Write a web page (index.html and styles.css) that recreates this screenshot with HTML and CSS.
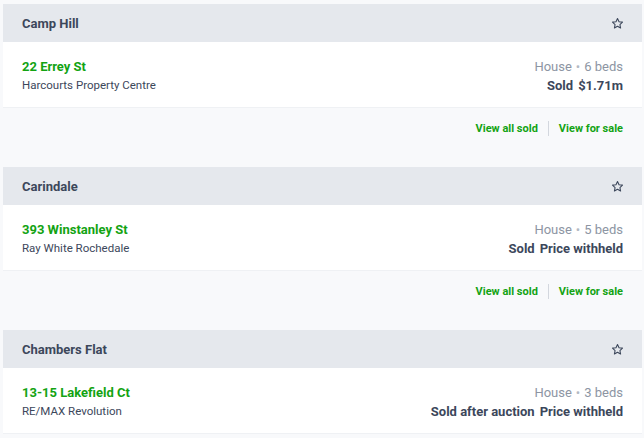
FILE: index.html
```html
<!DOCTYPE html>
<html lang="en">
<head>
<meta charset="utf-8">
<title>Sold properties</title>
<link rel="stylesheet" href="styles.css">
</head>
<body>
<div class="list">
  <section class="suburb">
    <header class="suburb-head">
      <h2 class="suburb-name">Camp Hill</h2>
      <button class="star" aria-label="Save suburb"><svg viewBox="0 0 24 24" width="13" height="13"><path d="M12 2.8l2.8 5.9 6.4.8-4.7 4.4 1.2 6.4L12 17.2l-5.7 3.1 1.2-6.4-4.7-4.4 6.4-.8z" fill="none" stroke="currentColor" stroke-width="2" stroke-linejoin="round"/></svg></button>
    </header>
    <div class="sale">
      <div class="sale-col">
        <a class="addr" href="#">22 Errey St</a>
        <div class="agency">Harcourts Property Centre</div>
      </div>
      <div class="sale-col right">
        <div class="meta">House<span class="dot">•</span>6 beds</div>
        <div class="price"><span>Sold</span><span>$1.71m</span></div>
      </div>
    </div>
    <div class="links">
      <a href="#">View all sold</a><span class="sep"></span><a href="#">View for sale</a>
    </div>
  </section>

  <section class="suburb">
    <header class="suburb-head">
      <h2 class="suburb-name">Carindale</h2>
      <button class="star" aria-label="Save suburb"><svg viewBox="0 0 24 24" width="13" height="13"><path d="M12 2.8l2.8 5.9 6.4.8-4.7 4.4 1.2 6.4L12 17.2l-5.7 3.1 1.2-6.4-4.7-4.4 6.4-.8z" fill="none" stroke="currentColor" stroke-width="2" stroke-linejoin="round"/></svg></button>
    </header>
    <div class="sale">
      <div class="sale-col">
        <a class="addr" href="#">393 Winstanley St</a>
        <div class="agency">Ray White Rochedale</div>
      </div>
      <div class="sale-col right">
        <div class="meta">House<span class="dot">•</span>5 beds</div>
        <div class="price"><span>Sold</span><span>Price withheld</span></div>
      </div>
    </div>
    <div class="links">
      <a href="#">View all sold</a><span class="sep"></span><a href="#">View for sale</a>
    </div>
  </section>

  <section class="suburb">
    <header class="suburb-head">
      <h2 class="suburb-name">Chambers Flat</h2>
      <button class="star" aria-label="Save suburb"><svg viewBox="0 0 24 24" width="13" height="13"><path d="M12 2.8l2.8 5.9 6.4.8-4.7 4.4 1.2 6.4L12 17.2l-5.7 3.1 1.2-6.4-4.7-4.4 6.4-.8z" fill="none" stroke="currentColor" stroke-width="2" stroke-linejoin="round"/></svg></button>
    </header>
    <div class="sale">
      <div class="sale-col">
        <a class="addr" href="#">13-15 Lakefield Ct</a>
        <div class="agency">RE/MAX Revolution</div>
      </div>
      <div class="sale-col right">
        <div class="meta">House<span class="dot">•</span>3 beds</div>
        <div class="price"><span>Sold after auction</span><span>Price withheld</span></div>
      </div>
    </div>
  </section>
</div>
</body>
</html>
```

FILE: styles.css
```css
* { box-sizing: border-box; }
html, body { margin: 0; padding: 0; }
body {
  background: #f8f9fb;
  font-family: Roboto, "Liberation Sans", sans-serif;
  color: #3c475b;
  overflow: hidden;
}
.list {
  padding: 4px 2px 0 3px;
}
.suburb {
  margin-bottom: 27px;
}
.suburb-head {
  height: 38px;
  background: #e5e8ed;
  display: flex;
  align-items: center;
  justify-content: space-between;
  padding: 0 19px;
}
.suburb-name {
  margin: 0;
  font-size: 13px;
  font-weight: 700;
  color: #3c475b;
}
.star {
  border: 0;
  background: none;
  padding: 0;
  color: #3c475b;
  display: flex;
  margin-right: -1px;
}
.sale {
  background: #fff;
  height: 66px;
  padding: 15px 19px 13px;
  display: flex;
  justify-content: space-between;
  border-bottom: 1px solid #eff1f4;
}
.sale-col {
  display: flex;
  flex-direction: column;
}
.sale-col.right { align-items: flex-end; }
.addr {
  font-size: 13px;
  line-height: 19px;
  font-weight: 700;
  color: #13a313;
  text-decoration: none;
}
.agency {
  font-size: 11.5px;
  line-height: 19px;
  color: #3c475b;
}
.meta {
  font-size: 13px;
  line-height: 19px;
  color: #8d95a3;
}
.dot {
  margin: 0 4px;
  font-size: 13px;
  color: #b3b9c3;
}
.price {
  font-size: 13px;
  line-height: 19px;
  font-weight: 700;
  color: #3c475b;
  display: flex;
  gap: 5px;
}
.links {
  display: flex;
  justify-content: flex-end;
  align-items: center;
  padding: 9px 19px 0;
  height: 32px;
}
.links a {
  font-size: 11px;
  font-weight: 700;
  color: #13a313;
  text-decoration: none;
}
.sep {
  width: 1px;
  height: 15px;
  background: #d3d7de;
  margin: 0 10px;
}
```
